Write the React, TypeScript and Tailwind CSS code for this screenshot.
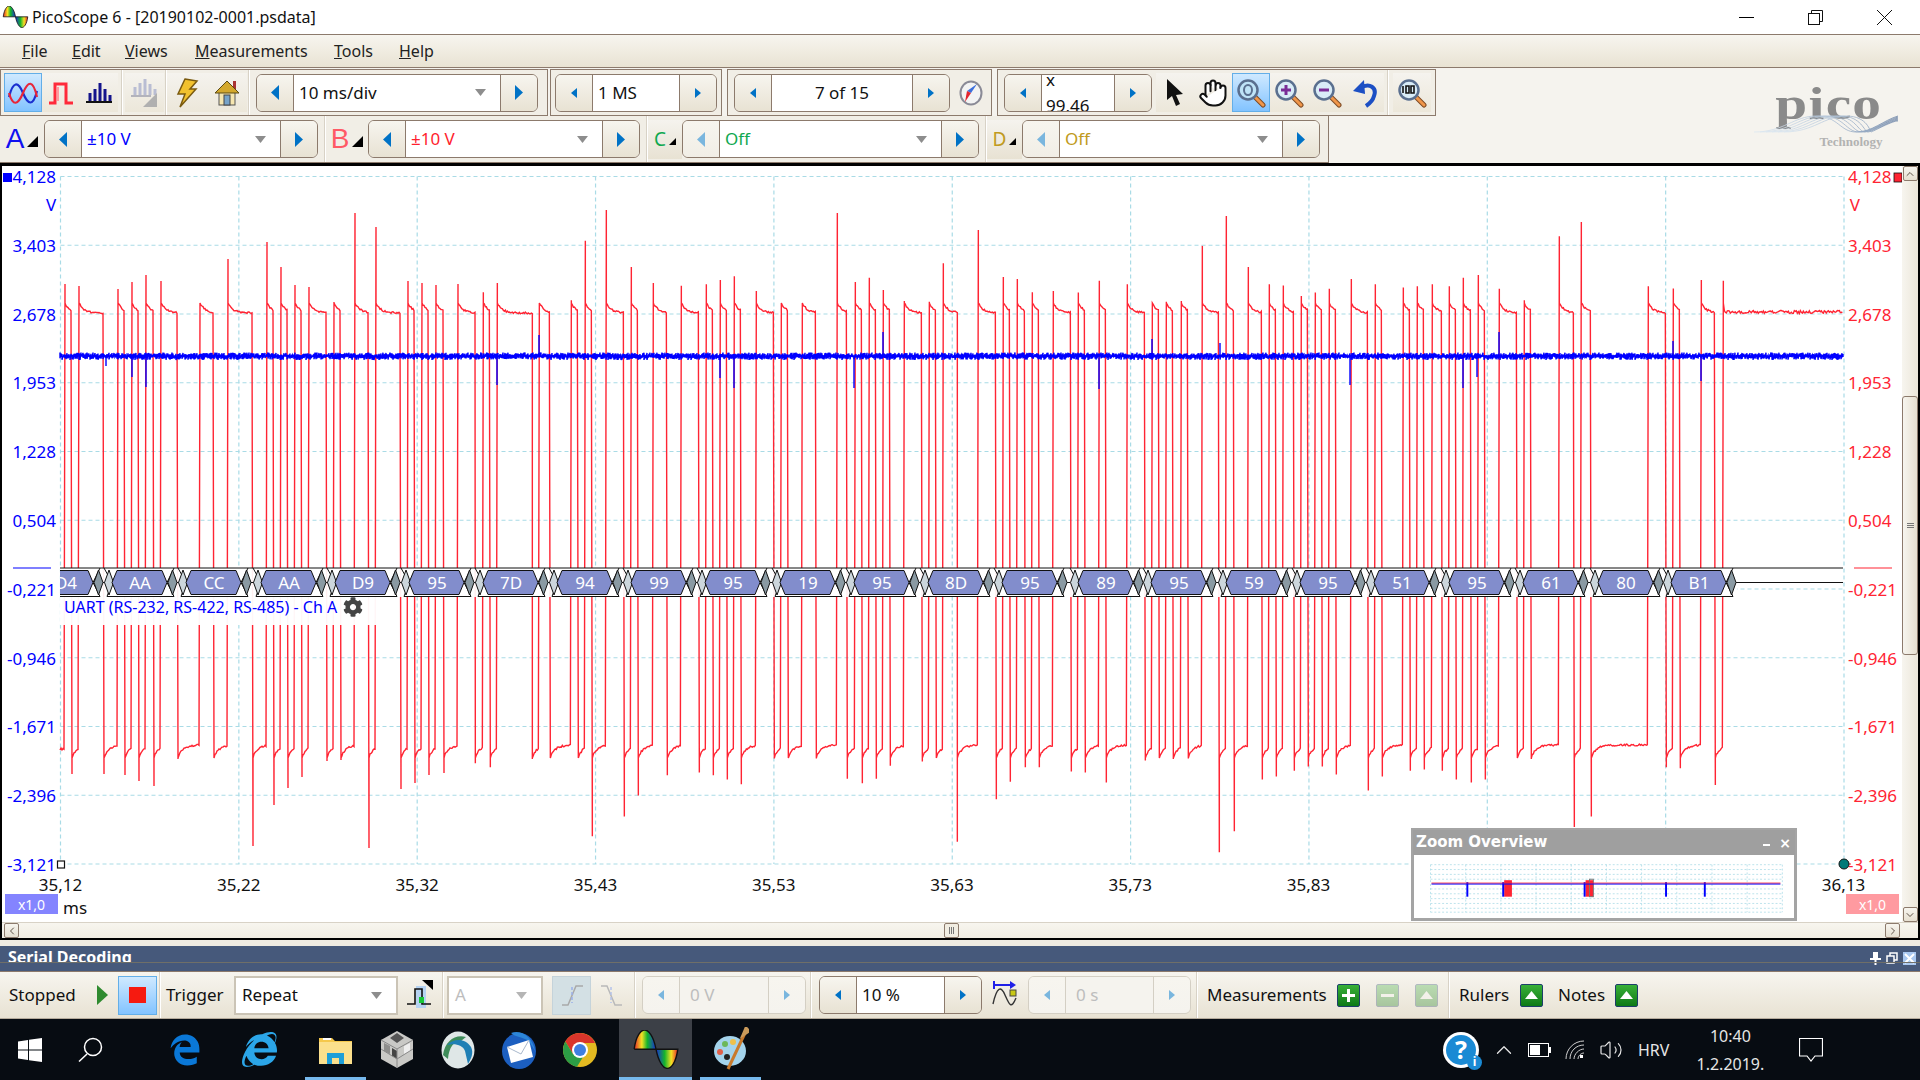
import type { ReactNode } from "react";
import { ChevronDown, ChevronLeft, ChevronRight, ChevronUp, Hand, Volume2 } from "lucide-react";
import { FaCog, FaEdgeLegacy, FaInternetExplorer } from "react-icons/fa";

// x / peak of every edge of channel B, read off the capture. They alternate rising, falling.
const toEdge = (off: number) => ([zx, zy]: number[]) => [off + zx / 3, 200 + zy / 2.376];

const EDGES: number[][] = [
  [65, 284], [72, 774], [79, 286], [104, 774], [118, 289], [125, 775], [132, 282], [139, 781], [146, 275], [154, 786],
  [161, 281], [178, 759], [200, 306], [214, 753], [228, 259], [253, 846], [267, 242], [274, 805], [281, 267], [288, 788],
  [295, 285], [302, 777], [309, 287], [327, 761], [334, 302], [341, 760], [355, 213], [369, 848], [376, 227], [401, 789],
  [408, 281], [415, 783], [422, 283], [429, 775], [436, 285], [444, 773], [458, 284],
  ...[
    [16, 1338], [40, 219], [61, 1348], [82, 197], [187, 1328], [208, 248], [241, 1320], [304, 238], [325, 1326], [346, 97],
    [367, 1512], [409, 24], [463, 1465], [484, 159], [505, 1415], [550, 197], [592, 1367], [634, 204], [688, 1360], [709, 200],
    [730, 1367], [751, 190], [772, 1377], [793, 181], [814, 1388], [859, 216], [913, 1327], [934, 248], [955, 1320], [997, 248],
    [1039, 1327], [1102, 31], [1132, 1375], [1156, 195], [1177, 1386], [1198, 185], [1219, 1375], [1240, 214], [1261, 1344], [1303, 240],
    [1357, 1334], [1378, 242], [1399, 1326], [1420, 150],
  ].map(toEdge(470)),
  ...[
    [22, 1525], [85, 71], [139, 1424], [160, 183], [181, 1382], [202, 188], [226, 1348], [247, 219], [268, 1348], [310, 216],
    [364, 1358], [385, 220], [406, 1360], [448, 192], [469, 1384], [532, 200], [586, 1332], [607, 248], [628, 1323], [649, 242],
    [670, 1328], [694, 240], [715, 1327], [757, 109], [808, 1550], [829, 38], [853, 1500], [895, 159], [937, 1377], [958, 200],
    [979, 1370], [1000, 203], [1033, 1356], [1054, 228], [1075, 1346], [1096, 220], [1117, 1346], [1138, 211], [1159, 1365], [1204, 188],
    [1255, 1403], [1276, 200], [1297, 1370], [1360, 208], [1381, 1356], [1402, 205], [1423, 1353],
  ].map(toEdge(950)),
  ...[
    [7, 200], [37, 1356], [58, 205], [79, 1377], [100, 185], [124, 1384], [145, 178], [166, 1377], [208, 211], [262, 1325],
    [283, 238], [304, 1328], [388, 86], [433, 1490], [454, 52], [484, 1465], [655, 205], [709, 1348], [730, 210], [751, 1350],
    [814, 190], [856, 1390], [880, 192],
  ].map(toEdge(1430)),
];

const BLUE_SPIKES = [
  [106, 366], [132, 377], [146, 387], [497, 385], [539, 335], [720, 378], [734, 388], [854, 388], [883, 332],
  [1099, 389], [1152, 339], [1220, 343], [1350, 385], [1463, 388], [1477, 377], [1499, 332], [1673, 341], [1701, 381],
];

const PACKETS: [number, string][] = [
  [66, "D4"], [140, "AA"], [214, "CC"], [289, "AA"], [363, "D9"], [437, "95"], [511, "7D"], [585, "94"],
  [659, "99"], [733, "95"], [808, "19"], [882, "95"], [956, "8D"], [1030, "95"], [1106, "89"], [1179, "95"],
  [1254, "59"], [1328, "95"], [1402, "51"], [1477, "95"], [1551, "61"], [1626, "80"], [1699, "B1"],
];

const Y_LABELS = ["4,128", "3,403", "2,678", "1,953", "1,228", "0,504", "-0,221", "-0,946", "-1,671", "-2,396", "-3,121"];
const X_LABELS = ["35,12", "35,22", "35,32", "35,43", "35,53", "35,63", "35,73", "35,83", "", "", "36,13"];
const GRID_X = Array.from({ length: 11 }, (_, i) => 60.5 + i * 178.35);
const GRID_Y = Array.from({ length: 11 }, (_, i) => 176.5 + i * 68.75);

function noise(seed: number) {
  let s = seed;
  return () => {
    s = (s * 16807) % 2147483647;
    return s / 2147483647;
  };
}

function redPath() {
  const rnd = noise(4242);
  let d = "M60 750";
  for (let px = 61; px < 65; px++) d += `L${px} ${748 + rnd() * 2}`;
  EDGES.forEach(([x, peak], i) => {
    const rising = i % 2 === 0;
    const next = i + 1 < EDGES.length ? EDGES[i + 1][0] : 1843;
    const last = i === EDGES.length - 1;
    d += `L${x} ${peak}L${x} ${rising ? 303 : 758}`;
    for (let px = x + 1; px < next; px += 1) {
      const t = Math.exp(-(px - x) / 5);
      const y = rising ? 313 - 10 * t : 745 + 12 * t;
      d += `L${px} ${(last ? 312 : y) + (rnd() - 0.5) * (last ? 3 : 1.8)}`;
    }
  });
  return d;
}

function bluePath() {
  const rnd = noise(977);
  let d = "M60 356";
  for (let px = 60; px <= 1843; px++) {
    d += `L${px} ${352.5 + rnd() * 3}L${px} ${356.5 + rnd() * 3.5}`;
  }
  return d;
}

const RED_D = redPath();
const BLUE_D = bluePath();

function Tri({ dir, big, off }: { dir: "left" | "right"; big?: boolean; off?: boolean }) {
  const w = big ? 8 : 6;
  const h = big ? 15 : 10;
  const pts = dir === "left" ? `${w},0 ${w},${h} 0,${h / 2}` : `0,0 ${w},${h / 2} 0,${h}`;
  return (
    <svg width={w} height={h}>
      <polygon points={pts} fill={off ? "#7ab6de" : "#0072c6"} />
    </svg>
  );
}

function DropTri({ light }: { light?: boolean }) {
  return (
    <svg width="11" height="7" className="shrink-0">
      <polygon points="0,0 11,0 5.5,7" fill={light ? "#b5b5b5" : "#8d8d8d"} />
    </svg>
  );
}

const SP_BTN = "w-[37px] h-full flex items-center justify-center bg-linear-to-b from-[#f7f5ef] to-[#e8e2d3]";

function Spinner({
  w,
  big,
  leftOff,
  off,
  arrowsBig,
  center,
  dropdown,
  color,
  children,
}: {
  w: number;
  big?: boolean;
  leftOff?: boolean;
  off?: boolean;
  arrowsBig?: boolean;
  center?: boolean;
  dropdown?: boolean;
  color?: string;
  children: ReactNode;
}) {
  return (
    <div
      style={{ width: w }}
      className={`h-[38px] flex shrink-0 rounded-[6px] overflow-hidden border ${
        off ? "border-[#d4cfc4]" : "border-[#8c7a6c]"
      }`}
    >
      <div className={`${SP_BTN} shrink-0 border-r ${off ? "border-[#d4cfc4] from-[#f5f3ee] to-[#f5f3ee]" : "border-[#8c7a6c]"} ${leftOff ? "from-[#f5f3ee] to-[#f1eee6]" : ""}`}>
        <Tri dir="left" big={big || arrowsBig} off={off || leftOff} />
      </div>
      <div
        style={{ color }}
        className={`flex-1 min-w-0 flex items-center text-[17px] ${off ? "bg-[#f5f3ee]" : "bg-white"} ${center ? "justify-center" : "justify-between pl-[5px] pr-[14px]"}`}
      >
        {children}
        {dropdown && <DropTri />}
      </div>
      <div className={`${SP_BTN} shrink-0 border-l ${off ? "border-[#d4cfc4] from-[#f5f3ee] to-[#f5f3ee]" : "border-[#8c7a6c]"}`}>
        <Tri dir="right" big={big || arrowsBig} off={off} />
      </div>
    </div>
  );
}

function Sep({ ml = 0 }: { ml?: number }) {
  return <div style={{ marginLeft: ml }} className="w-[2px] h-full shrink-0 bg-[#d8d2c6] border-r border-white" />;
}

function Cell({ children, active, w = 38 }: { children: ReactNode; active?: boolean; w?: number }) {
  return (
    <div
      style={{ width: w }}
      className={`h-[39px] shrink-0 flex items-center justify-center ${
        active ? "border border-[#63aee8] bg-linear-to-b from-[#cfe9ff] to-[#82c3ff]" : "bg-linear-to-b from-[#f5f3ee] to-[#ece7da]"
      }`}
    >
      {children}
    </div>
  );
}

function ScopeIcon() {
  return (
    <svg width="30" height="24" viewBox="0 0 30 24" fill="none" strokeWidth="2.2">
      <path d="M1 16C5 0 10 0 15 12S25 26 29 10" stroke="#1a2fd0" />
      <path d="M1 12C5 26 10 24 15 12S25-2 29 16" stroke="#e8263a" />
    </svg>
  );
}
function PersistIcon() {
  return (
    <svg width="26" height="24" viewBox="0 0 26 24" fill="none">
      <path d="M1 22H7V3H18V22H25" stroke="#ff2a3a" strokeWidth="3" />
      <path d="M10 6V20" stroke="#ff9aa0" strokeWidth="2" />
    </svg>
  );
}
function SpectrumIcon({ off }: { off?: boolean }) {
  const c = off ? "#b6b9cf" : "#14148c";
  return (
    <svg width="26" height="24" viewBox="0 0 26 24">
      <path d="M4 20V12M9 20V8M14 20V2M19 20V8M24 20V14" stroke={c} strokeWidth="3" />
      <path d="M0 21H26" stroke={off ? "#a8a8b8" : "#111"} strokeWidth="2" />
    </svg>
  );
}
function DisabledSpectrumIcon() {
  return (
    <svg width="28" height="30" viewBox="0 0 28 30">
      <path d="M4 17V9M9 17V5M14 17V1M19 17V6M24 17V11" stroke="#b9bdd3" strokeWidth="3" />
      <path d="M0 18H20" stroke="#b3b3bb" strokeWidth="2" />
      <polygon points="26,15 26,29 12,29" fill="#b0b0b0" />
    </svg>
  );
}
function BoltIcon() {
  return (
    <svg width="24" height="30" viewBox="0 0 24 30">
      <polygon points="10,1 22,3 15,11 21,11 5,29 10,16 3,16" fill="#f2c12e" stroke="#7a5a10" strokeWidth="1.5" />
    </svg>
  );
}
function HomeIcon() {
  return (
    <svg width="26" height="28" viewBox="0 0 26 28">
      <rect x="19" y="2" width="3" height="8" fill="#a33" />
      <rect x="5" y="12" width="16" height="14" fill="#f6e6b0" stroke="#555" />
      <polygon points="13,2 25,14 1,14" fill="#d4a82c" stroke="#5a4a14" />
      <rect x="10" y="16" width="6" height="10" fill="#77a3c9" stroke="#444" />
    </svg>
  );
}
function CompassIcon() {
  return (
    <svg width="24" height="26" viewBox="0 0 24 26">
      <ellipse cx="12" cy="13" rx="10.5" ry="11.5" fill="#f3f3f3" stroke="#8a8a96" strokeWidth="2" />
      <polygon points="18,4 12,13 8,11" fill="#3c6fdc" />
      <polygon points="6,22 12,13 8,11" fill="#e3242f" />
    </svg>
  );
}
function CursorIcon() {
  return (
    <svg width="18" height="30" viewBox="0 0 18 30">
      <polygon points="1,1 1,22 6,18 10,28 14,26 10,17 17,16" fill="#111" />
    </svg>
  );
}
function Magnifier({ children, active }: { children?: ReactNode; active?: boolean }) {
  return (
    <svg width="30" height="30" viewBox="0 0 30 30" fill="none">
      <path d="M18 18L27 27" stroke="#7d4a24" strokeWidth="5" strokeLinecap="round" />
      <path d="M18 18L27 27" stroke="#f0964a" strokeWidth="3" strokeLinecap="round" />
      <circle cx="12" cy="12" r="9.5" fill={active ? "#bfe3f7" : "#d9ecf7"} stroke="#5a6f8f" strokeWidth="2.5" />
      {children}
    </svg>
  );
}
function UndoIcon() {
  return (
    <svg width="26" height="30" viewBox="0 0 26 30" fill="none">
      <path d="M8 10C18 4 25 10 22 18C21 22 17 26 14 28" stroke="#1c4fc4" strokeWidth="4" />
      <polygon points="1,13 12,2 13,16" fill="#1c4fc4" />
    </svg>
  );
}
function PicoGlyph({ size = 27 }: { size?: number }) {
  return (
    <svg width={size} height={size * 0.8} viewBox="0 0 27 22">
      <defs>
        <linearGradient id="rainA" x1="0" x2="1" y1="0" y2="0">
          <stop offset="0" stopColor="#e8262a" />
          <stop offset="0.35" stopColor="#f2e224" />
          <stop offset="0.6" stopColor="#16b52c" />
          <stop offset="1" stopColor="#1a2bd8" />
        </linearGradient>
        <linearGradient id="rainB" x1="0" x2="1" y1="0" y2="0">
          <stop offset="0" stopColor="#1a2bd8" />
          <stop offset="0.4" stopColor="#16b52c" />
          <stop offset="0.7" stopColor="#f2e224" />
          <stop offset="1" stopColor="#e8262a" />
        </linearGradient>
      </defs>
      <path d="M1 11C2 3 5 0 7 0S12 3 13.5 11Z" fill="url(#rainA)" />
      <path d="M13.5 11C15 19 18 22 20 22S25 19 26 11Z" fill="url(#rainB)" />
      <path d="M1 11C2 3 5 0 7 0S12 3 13.5 11S18 22 20 22S25 19 26 11H1" fill="none" stroke="#111" strokeWidth="0.8" />
    </svg>
  );
}

function PicoLogo() {
  const offsets = [0, 6, 12, 18, 24, 30];
  return (
    <div className="relative w-[150px] h-[62px] mt-[16px] mr-[16px] shrink-0 flex flex-col items-center">
      <span className="font-['Liberation_Serif',serif] font-bold text-[#8a8a8a] text-[47px] leading-[38px] tracking-[1px] scale-x-[1.22]">
        pico
      </span>
      <svg width="150" height="20" viewBox="0 0 150 20" fill="none" className="absolute left-0 top-[30px]">
        <defs>
          <linearGradient id="logoWave" x1="0" x2="1" y1="0" y2="0">
            <stop offset="0" stopColor="#dce8f2" />
            <stop offset="0.55" stopColor="#a9bcd2" />
            <stop offset="1" stopColor="#6f86a8" />
          </linearGradient>
        </defs>
        {offsets.map((o) => (
          <path
            key={o}
            d={`M${o} 18C${30 + o} 18 ${40 + o} 2 ${62 + o} 2S${86 + o} 18 ${102 + o / 2} 18S${130 + o / 3} 6 ${144} ${2 + o / 6}`}
            stroke="url(#logoWave)"
            strokeWidth="0.8"
          />
        ))}
      </svg>
      <span className="font-['Liberation_Serif',serif] font-bold text-[#b2b2b2] text-[13px] leading-none mt-[13px] ml-[44px]">
        Technology
      </span>
    </div>
  );
}

function TitleBar() {
  return (
    <div className="h-[34px] shrink-0 bg-white flex items-center text-[16px] text-[#111]">
      <div className="w-[32px] pl-[2px] shrink-0">
        <PicoGlyph />
      </div>
      <span>PicoScope 6 - [20190102-0001.psdata]</span>
      <div className="ml-auto flex items-center h-full pr-[28px] gap-[54px]">
        <div className="w-[15px] h-px bg-black" />
        <svg width="15" height="15" viewBox="0 0 15 15" fill="none" stroke="#111">
          <rect x="0.5" y="3.5" width="11" height="11" />
          <path d="M3.5 3.5V0.5H14.5V11.5H11.5" />
        </svg>
        <svg width="15" height="15" viewBox="0 0 15 15" stroke="#111">
          <path d="M0 0L15 15M15 0L0 15" />
        </svg>
      </div>
    </div>
  );
}

function MenuBar() {
  const items: [string, string, number][] = [
    ["F", "ile", 22],
    ["E", "dit", 72],
    ["V", "iews", 125],
    ["M", "easurements", 195],
    ["T", "ools", 334],
    ["H", "elp", 399],
  ];
  return (
    <div className="h-[34px] shrink-0 flex items-center border-y border-[#8c7a6c] bg-linear-to-b from-[#f7f5ef] to-[#e9e3d3] text-[16px] text-[#222]">
      {items.map(([first, rest, x], i) => (
        <span key={x} style={{ marginLeft: i === 0 ? x : 0, width: i + 1 < items.length ? items[i + 1][2] - x : undefined }}>
          <span className="underline">{first}</span>
          {rest}
        </span>
      ))}
    </div>
  );
}

function Frame({ w, children }: { w: number; children: ReactNode }) {
  return (
    <div style={{ width: w }} className="h-[47px] shrink-0 flex items-center border border-[#8c7a6c] bg-[#f1eee6]">
      {children}
    </div>
  );
}

function TimeRow() {
  return (
    <div className="h-[47px] flex items-center">
      <Frame w={548}>
        <div className="ml-[3px]" />
        <Cell active>
          <ScopeIcon />
        </Cell>
        <Cell>
          <PersistIcon />
        </Cell>
        <Cell>
          <SpectrumIcon />
        </Cell>
        <Sep ml={3} />
        <div className="ml-[2px]" />
        <Cell w={39}>
          <DisabledSpectrumIcon />
        </Cell>
        <Sep ml={1} />
        <Cell w={40}>
          <BoltIcon />
        </Cell>
        <Cell w={40}>
          <HomeIcon />
        </Cell>
        <Sep ml={1} />
        <div className="ml-[6px]" />
        <Spinner w={282} big dropdown>
          <span className="text-[#111]">10 ms/div</span>
        </Spinner>
      </Frame>
      <div className="ml-[2px]" />
      <Frame w={172}>
        <div className="ml-[4px]" />
        <Spinner w={162}>
          <span className="text-[#111]">1 MS</span>
        </Spinner>
      </Frame>
      <div className="ml-[5px]" />
      <Frame w={265}>
        <div className="ml-[6px]" />
        <Spinner w={216} center>
          <span className="text-[#111]">7 of 15</span>
        </Spinner>
        <div className="ml-[9px]">
          <CompassIcon />
        </div>
      </Frame>
      <div className="ml-[5px]" />
      <Frame w={439}>
        <div className="ml-[6px]" />
        <Spinner w={148}>
          <span className="text-[#111] -ml-[1px]">x 99,46</span>
        </Spinner>
        <div className="ml-[4px]" />
        <Cell>
          <CursorIcon />
        </Cell>
        <Cell>
          <Hand size={30} color="#111" fill="#fff" strokeWidth={1.6} />
        </Cell>
        <Cell active>
          <Magnifier active>
            <ellipse cx="12" cy="12" rx="4" ry="5" fill="none" stroke="#5a6f8f" strokeWidth="2" />
          </Magnifier>
        </Cell>
        <Cell>
          <Magnifier>
            <path d="M7 12H17M12 7V17" stroke="#7a2c96" strokeWidth="3" />
          </Magnifier>
        </Cell>
        <Cell>
          <Magnifier>
            <path d="M7 12H17" stroke="#7a2c96" strokeWidth="3" />
          </Magnifier>
        </Cell>
        <Cell>
          <UndoIcon />
        </Cell>
        <Sep ml={3} />
        <div className="ml-[4px]" />
        <Cell>
          <Magnifier>
            <path d="M6 8V15M9 8h3v7h-3zM14 8h3v7h-3z" fill="none" stroke="#111" strokeWidth="1.6" />
          </Magnifier>
        </Cell>
      </Frame>
    </div>
  );
}

function Chan({ letter, color, w, boxed }: { letter: string; color: string; w: number; boxed?: boolean }) {
  return (
    <div style={{ width: w }} className={`h-[39px] shrink-0 flex items-center justify-center gap-[3px] ${boxed ? "bg-linear-to-b from-[#f5f3ee] to-[#e8e2d3]" : ""}`}>
      <span style={{ color }} className={boxed ? "text-[19px]" : "text-[28px] font-['Liberation_Sans',sans-serif]"}>
        {letter}
      </span>
      <svg width={boxed ? 7 : 11} height={boxed ? 7 : 11} className="mt-[4px]">
        <polygon points={boxed ? "7,0 7,7 0,7" : "11,0 11,11 0,11"} fill="#000" />
      </svg>
    </div>
  );
}

function ChannelRow() {
  return (
    <div className="w-[1329px] h-[47px] flex items-center border border-[#8c7a6c] border-t-0 border-l-0 bg-[#f1eee6]">
      <Chan letter="A" color="#1010f0" w={44} />
      <Spinner w={274} big dropdown color="#0000ff">
        ±10 V
      </Spinner>
      <Sep ml={6} />
      <Chan letter="B" color="#ff5a66" w={42} />
      <Spinner w={272} big dropdown color="#ff1e2e">
        ±10 V
      </Spinner>
      <Sep ml={6} />
      <Chan letter="C" color="#10a850" w={34} boxed />
      <Spinner w={297} big leftOff dropdown color="#10a850">
        Off
      </Spinner>
      <Sep ml={6} />
      <Chan letter="D" color="#c09a20" w={35} boxed />
      <Spinner w={298} big leftOff dropdown color="#c09a20">
        Off
      </Spinner>
    </div>
  );
}

function Packet({ c, label }: { c: number; label: string }) {
  const y = 582.5;
  return (
    <g>
      <path
        d={`M${c - 36} 568L${c - 28} ${y}L${c - 33} 596.5H${c + 34}L${c + 27} ${y}L${c + 34} 568`}
        fill="#fff"
        stroke="#111"
        strokeWidth="1"
      />
      <polygon
        points={`${c - 35.5},${y} ${c - 31},570 ${c - 26.5},${y} ${c - 31},595`}
        fill="#ccd6dc"
        stroke="#111"
        strokeWidth="1"
      />
      <polygon
        points={`${c - 28},${y} ${c - 23},570.5 ${c + 22},570.5 ${c + 27},${y} ${c + 22},594.5 ${c - 23},594.5`}
        fill="#828dcc"
        stroke="#111"
        strokeWidth="1"
      />
      <polygon
        points={`${c + 28},${y} ${c + 32.5},570 ${c + 37},${y} ${c + 32.5},595`}
        fill="#8a9aa3"
        stroke="#111"
        strokeWidth="1"
      />
      <path d={`M${c + 37} ${y}H${c + 40}`} stroke="#111" />
      <text x={c} y={y + 6} textAnchor="middle" className="fill-white text-[17px]">
        {label}
      </text>
    </g>
  );
}

function Trace() {
  return (
    <svg viewBox="2 166 1900 756" className="absolute inset-0 w-full h-full">
      <defs>
        <clipPath id="busClip">
          <rect x="60" y="560" width="1790" height="45" />
        </clipPath>
      </defs>
      <g stroke="#a9dbe6" strokeDasharray="4 3" strokeWidth="1.2">
        {GRID_X.map((x) => (
          <path key={x} d={`M${x} 176.5V864`} />
        ))}
        {GRID_Y.map((y) => (
          <path key={y} d={`M60.5 ${y}H1844`} />
        ))}
      </g>
      <path d={RED_D} fill="none" stroke="#ff2433" strokeWidth="1.4" />
      <path d={BLUE_D} fill="none" stroke="#0000ff" strokeWidth="1.4" />
      {BLUE_SPIKES.map(([x, y]) => (
        <path key={x} d={`M${x} 356V${y}`} stroke="#0000ff" strokeWidth="1.4" />
      ))}
      <rect x="60" y="568" width="1677" height="29" fill="#fff" fillOpacity="0.93" />
      <rect x="60" y="597" width="335" height="28" fill="#fff" fillOpacity="0.96" />
      <g clipPath="url(#busClip)">
        {PACKETS.map(([c, label]) => (
          <Packet key={c} c={c} label={label} />
        ))}
      </g>
      <path d="M60 568H1843M1737 582.5H1843" stroke="#111" strokeWidth="1.2" />
      <path d="M13 568H51" stroke="#0000ff" strokeWidth="1.2" />
      <path d="M1854 568H1892" stroke="#ff2433" strokeWidth="1.2" />
      <rect x="3" y="173" width="9" height="9" fill="#0000ff" />
      <rect x="1894" y="173" width="8" height="9" fill="#ff2433" stroke="#111" strokeWidth="0.8" />
      <rect x="57.5" y="861" width="7" height="7" fill="#fff" stroke="#111" strokeWidth="1.2" />
      <path d="M1844 864H1851" stroke="#ff2433" />
      <circle cx="1844" cy="864" r="5" fill="#007a78" stroke="#111" />
    </svg>
  );
}

function ZoomOverview() {
  const rows = [864, 869, 874, 879, 889, 894, 899, 904, 909, 913];
  const cols = Array.from({ length: 11 }, (_, i) => 1423 + i * 36.3);
  return (
    <div className="absolute left-[1409px] top-[662px] w-[386px] h-[93px] flex flex-col border-2 border-[#a4a4a4] bg-white">
      <div className="h-[25px] shrink-0 bg-[#9f9f9f] flex items-center justify-between pl-[3px] pr-[4px] text-white font-bold text-[15px] font-['DejaVu_Sans',sans-serif]">
        <span>Zoom Overview</span>
        <span className="flex items-center gap-[9px] text-[14px] leading-none">
          <span className="w-[7px] h-[2px] bg-white mt-[4px]" />×
        </span>
      </div>
      <svg viewBox="1411 854 382 65" className="flex-1 w-full border border-[#a4a4a4] border-t-0">
        <g stroke="#a9dbe6" strokeDasharray="2 2" strokeWidth="0.8">
          {rows.map((y) => (
            <path key={y} d={`M1423 ${y}H1786`} />
          ))}
          {cols.map((x) => (
            <path key={x} d={`M${x} 864V913`} />
          ))}
        </g>
        <rect x="1499" y="880" width="8" height="17" fill="#ff2433" />
        <rect x="1583" y="880" width="8" height="17" fill="#ff2433" />
        <rect x="1587" y="879" width="4" height="18" fill="none" stroke="#777" />
        {[1461, 1498, 1582, 1666, 1706].map((x) => (
          <rect key={x} x={x - 1} y="882" width="2" height="15" fill="#0000ff" />
        ))}
        <path d="M1424 883H1784" stroke="#ff2433" strokeWidth="1" />
        <path d="M1424 884H1784" stroke="#0000ff" strokeWidth="1" />
      </svg>
    </div>
  );
}

function Plot() {
  return (
    <div className="relative flex-1 min-w-0 bg-white flex flex-col">
      <Trace />
      <div className="relative h-[709px] flex justify-between text-[17px]">
        <div className="w-[56px] h-full flex flex-col justify-between items-end pr-[2px] text-[#0000ff]">
          {Y_LABELS.map((v) => (
            <span key={v} className="h-[21px] leading-[21px]">
              {v}
            </span>
          ))}
        </div>
        <div className="w-[54px] h-full flex flex-col justify-between text-[#ff2433]">
          {Y_LABELS.map((v) => (
            <span key={v} className="h-[21px] leading-[21px]">
              {v}
            </span>
          ))}
        </div>
        <span className="absolute left-[44px] top-[26px] text-[#0000ff]">V</span>
        <span className="absolute right-[42px] top-[26px] text-[#ff2433]">V</span>
        <div className="absolute left-[62px] top-[429px] flex items-center gap-[6px] text-[16px] text-[#0000ff]">
          <span>UART (RS-232, RS-422, RS-485) - Ch A</span>
          <FaCog size={20} color="#444" />
        </div>
      </div>
      <div className="relative h-[19px] mx-[58.5px] flex justify-between items-center text-[17px] text-[#111]">
        {X_LABELS.map((v, i) => (
          <span key={i} className="w-0 flex justify-center whitespace-nowrap">
            {v}
          </span>
        ))}
      </div>
      <div className="relative h-[20px] flex items-start text-[17px] text-[#111]">
        <div className="ml-[3px] w-[53px] h-full bg-[#8484ff] text-white text-[14px] flex items-center justify-center">x1,0</div>
        <span className="ml-[5px] mt-[5px] leading-none">ms</span>
        <div className="ml-auto mr-[3px] w-[53px] h-full bg-[#ff9aa0] text-white text-[14px] flex items-center justify-center">x1,0</div>
      </div>
      <ZoomOverview />
    </div>
  );
}

function ScrollBtn({ children }: { children: ReactNode }) {
  return (
    <div className="w-[15px] h-[15px] shrink-0 flex items-center justify-center rounded-[2px] border border-[#8c7a6c] bg-linear-to-b from-[#f7f5ef] to-[#e6dfd0] text-[#5e5248]">
      {children}
    </div>
  );
}

function VScroll() {
  return (
    <div className="w-[16px] shrink-0 flex flex-col items-center bg-linear-to-r from-[#f7f5ef] to-[#ebe6d9]">
      <ScrollBtn>
        <ChevronUp size={12} strokeWidth={2} />
      </ScrollBtn>
      <div className="flex-1 w-full flex flex-col pt-[215px] pb-[252px]">
        <div className="flex-1 rounded-[3px] border border-[#8c7a6c] bg-linear-to-r from-[#f7f5ef] to-[#e6dfd0] flex flex-col items-center justify-center gap-[1px]">
          <div className="w-[7px] h-px bg-[#777]" />
          <div className="w-[7px] h-px bg-[#777]" />
          <div className="w-[7px] h-px bg-[#777]" />
        </div>
      </div>
      <ScrollBtn>
        <ChevronDown size={12} strokeWidth={2} />
      </ScrollBtn>
    </div>
  );
}

function HScroll() {
  return (
    <div className="h-[16px] shrink-0 flex items-center border-t border-[#d8d2c6] bg-linear-to-b from-[#f7f5ef] to-[#f1ede2] pl-[2px] pr-[18px]">
      <ScrollBtn>
        <ChevronLeft size={12} strokeWidth={2} />
      </ScrollBtn>
      <div className="flex-1 flex justify-center pr-[190px]">
        <div className="ml-[188px] w-[15px] h-[15px] rounded-[2px] border border-[#8c7a6c] bg-[#f1ede2] flex items-center justify-center gap-px">
          <div className="w-px h-[7px] bg-[#777]" />
          <div className="w-px h-[7px] bg-[#777]" />
          <div className="w-px h-[7px] bg-[#777]" />
        </div>
      </div>
      <ScrollBtn>
        <ChevronRight size={12} strokeWidth={2} />
      </ScrollBtn>
    </div>
  );
}

function GreenBtn({ kind, off }: { kind: "plus" | "minus" | "up"; off?: boolean }) {
  return (
    <div
      className={`w-[23px] h-[23px] shrink-0 rounded-[2px] flex items-center justify-center bg-linear-to-b from-[#38b038] to-[#0c7a16] border border-[#1d3f6a] ${
        off ? "opacity-30" : ""
      }`}
    >
      <svg width="15" height="15" viewBox="0 0 15 15" fill="#fff">
        {kind === "plus" && <path d="M6 1H9V6H14V9H9V14H6V9H1V6H6Z" />}
        {kind === "minus" && <path d="M1 6H14V9H1Z" />}
        {kind === "up" && <polygon points="7.5,3 14,11 1,11" />}
      </svg>
    </div>
  );
}

function PlainDrop({ w, muted, children }: { w: number; muted?: boolean; children: ReactNode }) {
  return (
    <div
      style={{ width: w }}
      className={`h-[39px] shrink-0 flex items-center justify-between pl-[6px] pr-[14px] bg-white border-2 border-[#cbc4b6] text-[17px] ${
        muted ? "text-[#bdbdbd]" : "text-[#111]"
      }`}
    >
      {children}
      <DropTri light={muted} />
    </div>
  );
}

function SerialBar() {
  return (
    <div className="h-[26px] shrink-0 flex flex-col bg-[#46597b] border-b border-[#8c7a6c] overflow-hidden">
      <div className="h-[16px] shrink-0 flex items-center justify-between pl-[8px] pr-[4px]">
        <span className="text-white font-bold text-[16px] leading-[20px] h-[16px] mt-[1px] overflow-hidden">Serial Decoding</span>
        <div className="flex items-center gap-[5px] mt-[8px] text-white">
          <svg width="11" height="13" viewBox="0 0 11 13" fill="#fff">
            <path d="M3 0H8V6H11V8H6.5V13H4.5V8H0V6H3Z" />
          </svg>
          <svg width="12" height="12" viewBox="0 0 12 12" fill="none" stroke="#fff" strokeWidth="1.5">
            <rect x="1" y="4" width="7" height="7" />
            <path d="M4 4V1H11V8H8" />
          </svg>
          <span className="w-[13px] h-[13px] bg-[#a9c8f0] text-[#46597b] flex items-center justify-center">
            <svg width="11" height="11" stroke="#fff" strokeWidth="2">
              <path d="M1 1L10 10M10 1L1 10" />
            </svg>
          </span>
        </div>
      </div>
      <div className="h-px bg-[#6f6f68]" />
    </div>
  );
}

function BottomToolbar() {
  return (
    <div className="h-[47px] shrink-0 flex items-center bg-linear-to-b from-[#f7f5ef] to-[#e8e2d3] border-b border-[#b5ab9c] text-[17px] text-[#111]">
      <span className="ml-[9px] w-[78px]">Stopped</span>
      <div className="w-[31px] flex justify-center">
        <svg width="11" height="20">
          <polygon points="0,0 11,10 0,20" fill="#2f8a2f" />
        </svg>
      </div>
      <div className="w-[39px] h-[39px] shrink-0 flex items-center justify-center border border-[#63aee8] bg-linear-to-b from-[#cfe9ff] to-[#82c3ff]">
        <div className="w-[17px] h-[16px] bg-[#f61a10]" />
      </div>
      <Sep ml={2} />
      <span className="ml-[5px] w-[68px]">Trigger</span>
      <PlainDrop w={164}>Repeat</PlainDrop>
      <div className="w-[44px] flex justify-center">
        <svg width="26" height="30" viewBox="0 0 26 30" fill="none">
          <rect x="9" y="6" width="10" height="22" fill="#b6d3f2" />
          <path d="M0 24H8V9H15V24H24" stroke="#111" strokeWidth="1.6" />
          <rect x="12" y="17" width="5" height="6" fill="#18c838" />
          <polygon points="15,0 26,0 26,10" fill="#000" />
        </svg>
      </div>
      <Sep />
      <div className="ml-[3px]" />
      <PlainDrop w={96} muted>
        A
      </PlainDrop>
      <div className="ml-[9px] w-[39px] h-[39px] shrink-0 flex items-center justify-center border border-[#c5d3da] bg-[#d3e0e4]">
        <svg width="24" height="24" viewBox="0 0 24 24" fill="none" stroke="#a9a9a9" strokeWidth="1.5">
          <path d="M2 22H8L16 3H23" />
          <path d="M12 4V20" stroke="#9ab0e8" strokeDasharray="3 2" />
        </svg>
      </div>
      <div className="w-[39px] flex justify-center">
        <svg width="24" height="24" viewBox="0 0 24 24" fill="none" stroke="#b9b9b9" strokeWidth="1.5">
          <path d="M2 3H8L16 22H23" />
          <path d="M12 4V20" stroke="#b4c2ea" strokeDasharray="3 2" />
        </svg>
      </div>
      <Sep ml={4} />
      <div className="ml-[6px]" />
      <Spinner w={164} off>
        <span className="text-[#bdbdbd] ml-[5px]">0 V</span>
      </Spinner>
      <Sep ml={4} />
      <div className="ml-[7px]" />
      <Spinner w={163}>
        <span>10 %</span>
      </Spinner>
      <div className="w-[46px] flex justify-center">
        <svg width="26" height="30" viewBox="0 0 26 30" fill="none">
          <path d="M2 5H21M2 1V9" stroke="#2020e8" strokeWidth="2" />
          <polygon points="18,1 24,5 18,9" fill="#2020e8" />
          <path d="M1 24C5 6 9 6 13 15S19 30 24 18" stroke="#333" strokeWidth="1.4" />
          <rect x="18" y="10" width="6" height="6" fill="#c8c814" stroke="#444" />
        </svg>
      </div>
      <Spinner w={163} off>
        <span className="text-[#bdbdbd] ml-[5px]">0 s</span>
      </Spinner>
      <Sep ml={5} />
      <span className="ml-[9px] w-[130px]">Measurements</span>
      <GreenBtn kind="plus" />
      <div className="ml-[16px]" />
      <GreenBtn kind="minus" off />
      <div className="ml-[16px]" />
      <GreenBtn kind="up" off />
      <Sep ml={10} />
      <span className="ml-[9px] w-[61px]">Rulers</span>
      <GreenBtn kind="up" />
      <span className="ml-[15px] w-[57px]">Notes</span>
      <GreenBtn kind="up" />
    </div>
  );
}

function TaskSlot({ w, on, active, children }: { w: number; on?: boolean; active?: boolean; children: ReactNode }) {
  return (
    <div style={{ width: w }} className={`relative h-full shrink-0 flex items-center justify-center ${active ? "bg-[#3c4047]" : ""}`}>
      {children}
      {on && <div className="absolute left-0 right-0 bottom-0 h-[3px] bg-[#76b9ed]" />}
    </div>
  );
}

function Taskbar() {
  return (
    <div className="h-[61px] shrink-0 bg-[#070c12] flex items-center text-[#e6e6e6]">
      <div className="w-[60px] flex justify-center">
        <svg width="24" height="24" viewBox="0 0 24 24" fill="#fff">
          <path d="M0 3.4L10 2V11.5H0ZM11 1.8L24 0V11.5H11ZM0 12.5H10V22L0 20.6ZM11 12.5H24V24L11 22.2Z" />
        </svg>
      </div>
      <div className="w-[60px] flex justify-center">
        <svg width="25" height="25" viewBox="0 0 25 25" fill="none" stroke="#fff" strokeWidth="1.5">
          <circle cx="15" cy="10" r="8.5" />
          <path d="M9 17L1 24.5" />
        </svg>
      </div>
      <div className="w-[35px]" />
      <TaskSlot w={60}>
        <FaEdgeLegacy size={32} color="#0a78d7" />
      </TaskSlot>
      <div className="w-[14px]" />
      <TaskSlot w={60}>
        <FaInternetExplorer size={35} color="#2ba6e8" />
      </TaskSlot>
      <div className="w-[16px]" />
      <TaskSlot w={61} on>
        <svg width="33" height="28" viewBox="0 0 33 28">
          <path d="M0 2H13L16 5H33V28H0Z" fill="#f5c84c" />
          <rect x="0" y="6" width="33" height="22" fill="#fbe08c" />
          <rect x="4" y="2" width="8" height="2" fill="#fff" />
          <path d="M8 28V17H25V28H20V22H13V28Z" fill="#1e9fd8" />
        </svg>
      </TaskSlot>
      <TaskSlot w={61}>
        <svg width="32" height="37" viewBox="0 0 32 37">
          <polygon points="16,0 32,9 32,28 16,37 0,28 0,9" fill="#c9c9c6" />
          <polygon points="16,2 23,7 16,12 9,7" fill="#555" />
          <polygon points="3,12 9,15 9,23 3,20" fill="#8e8e8c" />
          <polygon points="11,17 16,20 16,28 11,25" fill="#444" />
          <polygon points="23,15 29,12 29,20 23,23" fill="#eee" />
          <path d="M16 18V37M0 9L16 18L32 9M0 18L16 28L32 18" stroke="#888" fill="none" />
        </svg>
      </TaskSlot>
      <TaskSlot w={61}>
        <svg width="34" height="38" viewBox="0 0 34 38">
          <ellipse cx="17" cy="19" rx="16.5" ry="18.5" fill="#dfe7e7" />
          <path d="M2 24C4 10 14 3 25 6L20 10C13 10 8 16 7 28Z" fill="#3e8c5a" />
          <path d="M6 14C14 6 25 8 30 16C33 22 30 28 27 33L24 20C22 14 14 12 6 14Z" fill="#1f7fb5" />
        </svg>
      </TaskSlot>
      <TaskSlot w={61}>
        <svg width="36" height="38" viewBox="0 0 36 38">
          <ellipse cx="18" cy="20" rx="17" ry="18" fill="#1c5fc0" />
          <path d="M10 2C20-2 32 6 34 20L28 10C22 6 14 6 10 2Z" fill="#2c86d8" />
          <polygon points="6,16 28,9 32,26 10,32" fill="#fff" />
          <path d="M6 16L20 23L28 9" stroke="#a9b8cc" fill="none" />
        </svg>
      </TaskSlot>
      <TaskSlot w={61}>
        <svg width="36" height="36" viewBox="0 0 36 36">
          <circle cx="18" cy="18" r="17" fill="#e3ba21" />
          <path d="M18 1A17 17 0 0 0 3.3 9.5L11 22L18 11H33A17 17 0 0 0 18 1Z" fill="#d9352b" />
          <path d="M3.3 9.5A17 17 0 0 0 15 34.7L21 25L11 22Z" fill="#2c9d45" />
          <circle cx="18" cy="18" r="8" fill="#fff" />
          <circle cx="18" cy="18" r="6" fill="#3f7fe0" />
        </svg>
      </TaskSlot>
      <div className="w-[9px]" />
      <TaskSlot w={73} on active>
        <PicoGlyph size={48} />
      </TaskSlot>
      <div className="w-[8px]" />
      <TaskSlot w={61} on>
        <svg width="36" height="46" viewBox="0 0 36 46">
          <ellipse cx="17" cy="24" rx="16" ry="15" fill="#a4d4ec" />
          <circle cx="7" cy="25" r="3" fill="#e0604a" />
          <circle cx="12" cy="17" r="3" fill="#6cb85a" />
          <circle cx="20" cy="15" r="3" fill="#eec04a" />
          <circle cx="14" cy="30" r="3" fill="#222" />
          <path d="M15 42L32 6" stroke="#c97a2c" strokeWidth="3" />
          <path d="M30 8L33 1L36 4Z" fill="#e0b070" stroke="#c99a5a" strokeWidth="3" />
        </svg>
      </TaskSlot>
      <div className="relative ml-[682px] w-[36px] h-[36px] rounded-full bg-white flex items-center justify-center">
        <div className="w-[30px] h-[30px] rounded-full bg-[#1a8ad4] flex items-center justify-center text-white font-bold text-[25px] leading-none">?</div>
        <div className="absolute -right-[3px] -bottom-[2px] w-[15px] h-[15px] rounded-full bg-[#1a8ad4] flex items-center justify-center text-white font-bold text-[12px] leading-none">i</div>
      </div>
      <ChevronUp size={26} strokeWidth={1.2} className="ml-[12px]" />
      <svg width="23" height="14" viewBox="0 0 23 14" fill="none" className="ml-[11px]">
        <rect x="0.5" y="0.5" width="20" height="13" stroke="#fff" />
        <rect x="2" y="2" width="10" height="10" fill="#fff" />
        <rect x="21" y="4" width="2" height="6" fill="#fff" />
      </svg>
      <svg width="20" height="20" viewBox="0 0 20 20" fill="none" stroke="#cfcfcf" className="ml-[14px]">
        <path d="M1 19C1 9 9 1 19 1M5 19C5 11 11 5 19 5M9 19C9 14 14 9 19 9M13 19C13 16 16 13 19 13" />
        <rect x="15" y="15" width="3" height="3" fill="#fff" stroke="none" />
      </svg>
      <Volume2 size={24} strokeWidth={1.2} className="ml-[14px]" />
      <span className="ml-[15px] text-[16px]">HRV</span>
      <div className="ml-[20px] w-[82px] flex flex-col items-center text-[16px] leading-[28px]">
        <span>10:40</span>
        <span>1.2.2019.</span>
      </div>
      <svg width="24" height="24" viewBox="0 0 24 24" fill="none" stroke="#fff" strokeWidth="1.2" className="ml-[28px]">
        <path d="M0.5 0.5H23.5V18H16L12 23L8 18H0.5Z" />
      </svg>
    </div>
  );
}

export default function App() {
  return (
    <div className="w-[1920px] h-[1080px] overflow-hidden flex flex-col bg-white font-['Noto_Sans',sans-serif]">
      <TitleBar />
      <MenuBar />
      <div className="h-[95px] shrink-0 flex justify-between bg-[#f5f3ee]">
        <div className="flex flex-col pt-px">
          <TimeRow />
          <ChannelRow />
        </div>
        <PicoLogo />
      </div>
      <div className="h-[777px] shrink-0 flex flex-col border-t-[3px] border-b-2 border-x-2 border-black bg-[#f1ede2]">
        <div className="flex-1 flex min-h-0">
          <Plot />
          <VScroll />
        </div>
        <HScroll />
      </div>
      <div className="h-[6px] shrink-0 bg-[#efebe2]" />
      <SerialBar />
      <BottomToolbar />
      <Taskbar />
    </div>
  );
}
